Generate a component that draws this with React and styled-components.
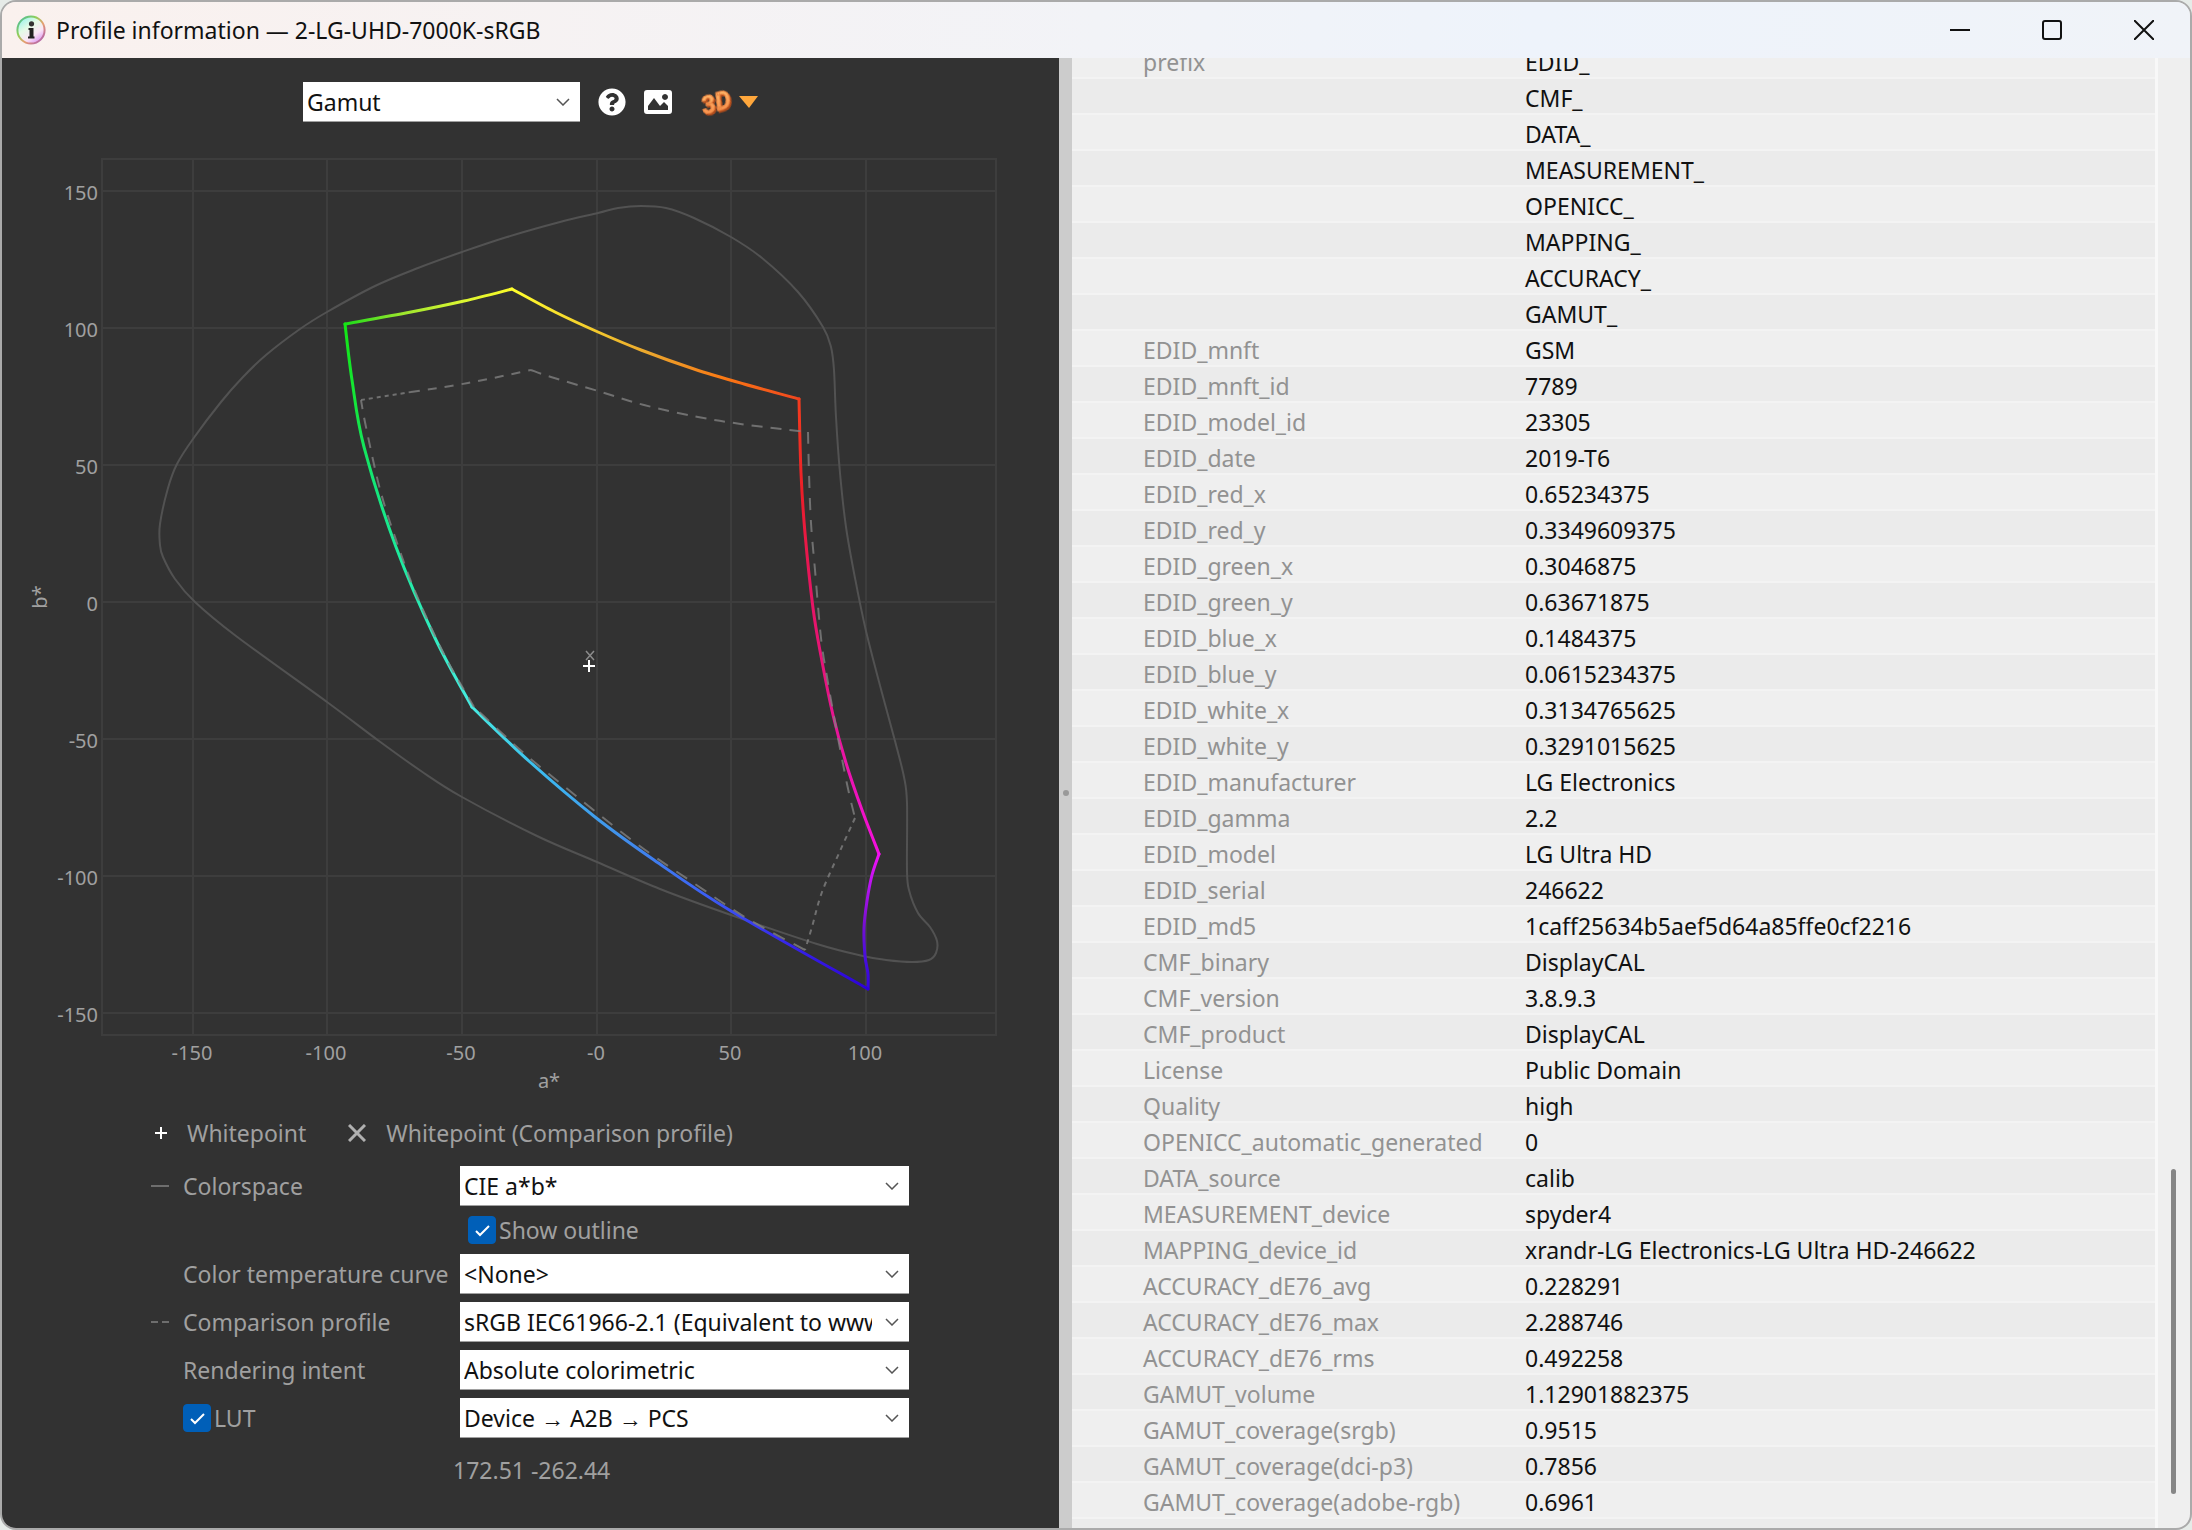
import { useState } from "react";
import styled, { createGlobalStyle } from "styled-components";
import { FaQuestionCircle } from "react-icons/fa";

const metadata = [
  ["prefix", "EDID_"],
  ["", "CMF_"],
  ["", "DATA_"],
  ["", "MEASUREMENT_"],
  ["", "OPENICC_"],
  ["", "MAPPING_"],
  ["", "ACCURACY_"],
  ["", "GAMUT_"],
  ["EDID_mnft", "GSM"],
  ["EDID_mnft_id", "7789"],
  ["EDID_model_id", "23305"],
  ["EDID_date", "2019-T6"],
  ["EDID_red_x", "0.65234375"],
  ["EDID_red_y", "0.3349609375"],
  ["EDID_green_x", "0.3046875"],
  ["EDID_green_y", "0.63671875"],
  ["EDID_blue_x", "0.1484375"],
  ["EDID_blue_y", "0.0615234375"],
  ["EDID_white_x", "0.3134765625"],
  ["EDID_white_y", "0.3291015625"],
  ["EDID_manufacturer", "LG Electronics"],
  ["EDID_gamma", "2.2"],
  ["EDID_model", "LG Ultra HD"],
  ["EDID_serial", "246622"],
  ["EDID_md5", "1caff25634b5aef5d64a85ffe0cf2216"],
  ["CMF_binary", "DisplayCAL"],
  ["CMF_version", "3.8.9.3"],
  ["CMF_product", "DisplayCAL"],
  ["License", "Public Domain"],
  ["Quality", "high"],
  ["OPENICC_automatic_generated", "0"],
  ["DATA_source", "calib"],
  ["MEASUREMENT_device", "spyder4"],
  ["MAPPING_device_id", "xrandr-LG Electronics-LG Ultra HD-246622"],
  ["ACCURACY_dE76_avg", "0.228291"],
  ["ACCURACY_dE76_max", "2.288746"],
  ["ACCURACY_dE76_rms", "0.492258"],
  ["GAMUT_volume", "1.12901882375"],
  ["GAMUT_coverage(srgb)", "0.9515"],
  ["GAMUT_coverage(dci-p3)", "0.7856"],
  ["GAMUT_coverage(adobe-rgb)", "0.6961"],
];

const xTicks = [
  ["-150", 193],
  ["-100", 327],
  ["-50", 462],
  ["-0", 597],
  ["50", 731],
  ["100", 866],
];

const yTicks = [
  ["150", 191],
  ["100", 328],
  ["50", 465],
  ["0", 602],
  ["-50", 739],
  ["-100", 876],
  ["-150", 1013],
];

// edges of the profile gamut, corner to corner
const gamutEdges = [
  {
    id: "green-yellow",
    colors: ["#19dc19", "#9be62d", "#d7f532", "#fafa28"],
    points: [[345, 324], [411, 312], [464, 301], [512, 289]],
  },
  {
    id: "yellow-red",
    colors: ["#ffff2d", "#f5d22d", "#eba52d", "#fa7814", "#f0461e"],
    points: [[512, 289], [555, 312], [598, 332], [641, 350], [694, 369], [744, 384], [799, 399]],
  },
  {
    id: "red-magenta",
    colors: ["#f53c1e", "#eb1e28", "#e6145f", "#e6147d", "#eb14aa", "#f50fe1"],
    points: [[799, 399], [801, 473], [805, 533], [813, 608], [821, 656], [833, 715], [846, 763], [862, 810], [879, 854]],
  },
  {
    id: "magenta-blue",
    colors: ["#f50ff5", "#b414f0", "#7d0fd2", "#4b0fdc", "#3205dc"],
    points: [[879, 854], [872, 875], [867, 901], [864, 928], [865, 956], [868, 974], [868, 989]],
  },
  {
    id: "blue-cyan",
    colors: ["#2d00d7", "#3728eb", "#3c64f5", "#4191eb", "#3cb9f0", "#46ebe1"],
    points: [[868, 989], [731, 911], [654, 860], [595, 817], [530, 762], [472, 707]],
  },
  {
    id: "cyan-green",
    colors: ["#46ebe1", "#32ebbe", "#1eeba0", "#14e678", "#14e63c", "#14e614"],
    points: [[472, 707], [435, 638], [396, 547], [364, 447], [352, 380], [345, 324]],
  },
];

const comparisonEdges = [
  { dash: "4 4", points: [[361, 400], [411, 392]] },
  { dash: "9 8", points: [[411, 392], [468, 383], [531, 370]] },
  { dash: "11 8", points: [[531, 370], [551, 377], [598, 391], [644, 405], [698, 417], [748, 425], [808, 432]] },
  { dash: "12 10", points: [[808, 432], [809, 473], [811, 523], [815, 570], [821, 638], [827, 677], [835, 722], [847, 784], [855, 818]] },
  { dash: "5 5", points: [[855, 818], [840, 851], [822, 892], [812, 927], [805, 950]] },
  { dash: "13 10", points: [[805, 950], [748, 919], [698, 886], [633, 841], [549, 774], [518, 748], [474, 707]] },
  { dash: "11 9", points: [[474, 707], [446, 658], [420, 603], [402, 557], [381, 493], [366, 427], [361, 400]] },
];

const locus = [
  [160, 545], [160, 524], [168, 488], [177, 464], [193, 439], [221, 402], [243, 377],
  [266, 355], [300, 329], [327, 312], [375, 286], [418, 268], [462, 252], [507, 237],
  [560, 222], [598, 213], [618, 208], [641, 206], [666, 208], [694, 218],
  [731, 237], [762, 258], [798, 292], [823, 327], [831, 347], [834, 370], [836, 417],
  [840, 473], [846, 527], [855, 578], [866, 631], [882, 693], [895, 741], [904, 777],
  [907, 803], [907, 870], [909, 890], [918, 913], [930, 927], [937, 941], [936, 953],
  [929, 960], [912, 962], [886, 960], [863, 956], [817, 944], [731, 915],
  [660, 889], [597, 862], [537, 836], [462, 797], [421, 771], [379, 741],
  [327, 702], [236, 636], [195, 602], [175, 579], [163, 557],
];

// Catmull-Rom spline through the points, written as cubic beziers
const spline = (points, closed = false) => {
  const n = points.length;
  const at = (i) =>
    closed ? points[(i + n) % n] : points[Math.min(Math.max(i, 0), n - 1)];
  let d = `M${points[0]}`;
  for (let i = 0; i < (closed ? n : n - 1); i++) {
    const [a, b, c, e] = [at(i - 1), at(i), at(i + 1), at(i + 2)];
    const c1 = [b[0] + (c[0] - a[0]) / 6, b[1] + (c[1] - a[1]) / 6];
    const c2 = [c[0] - (e[0] - b[0]) / 6, c[1] - (e[1] - b[1]) / 6];
    d += `C${c1} ${c2} ${c}`;
  }
  return d;
};

const GlobalStyle = createGlobalStyle`
  * {
    box-sizing: border-box;
  }

  body {
    margin: 0;
    background: #e6ebe8;
    font-family: "Segoe UI", "Noto Sans", "Open Sans", sans-serif;
    font-size: 23px;
    line-height: 32px;
  }

  button,
  select {
    font: inherit;
  }

  svg {
    display: block;
  }
`;

const Window = styled.main`
  display: flex;
  flex-direction: column;
  height: 100vh;
  overflow: hidden;
  border: 2px solid #aaaaaa;
  border-radius: 16px;
  background: #efefef;
`;

const TitleBar = styled.header`
  display: flex;
  flex: none;
  align-items: center;
  height: 56px;
  padding-left: 14px;
  background: linear-gradient(90deg, #faf1ee, #f2f3f7 50%, #eef3fb 70%, #f0f3f8);
`;

const Title = styled.h1`
  flex: 1;
  margin: 0;
  padding-left: 10px;
  color: #111;
  font-size: 23px;
  font-weight: 400;
`;

const WindowButton = styled.button`
  display: grid;
  place-items: center;
  width: 92px;
  height: 56px;
  padding: 0;
  border: 0;
  background: none;
`;

const Body = styled.div`
  display: grid;
  flex: 1;
  grid-template-columns: minmax(0, 1057fr) 13px minmax(0, 1118fr);
  min-height: 0;
`;

const PlotPanel = styled.section`
  overflow: hidden;
  background: #323232;
  color: #a0a0a0;
`;

const Toolbar = styled.div`
  display: flex;
  align-items: center;
  justify-content: center;
  gap: 18px;
  height: 82px;
  padding: 24px 0 18px;
`;

const PlotPicker = styled.div`
  width: 277px;
`;

const ToolButton = styled.button`
  padding: 0;
  border: 0;
  background: none;
  color: #fff;

  &:last-child {
    margin-left: 10px;
  }
`;

const Chart = styled.svg`
  width: 100%;
  height: auto;
`;

const Controls = styled.div`
  display: grid;
  width: 759px;
  margin: 0 auto;
`;

const Legend = styled.div`
  display: flex;
  align-items: center;
  height: 46px;
  padding-left: 4px;
`;

const LegendText = styled.span`
  padding: 0 42px 0 20px;
`;

const Form = styled.form`
  display: grid;
  grid-template-columns: 32px 277px 449px;
  gap: 8px 0;
  align-items: center;
  padding-top: 10px;
`;

const LineKey = styled.svg`
  width: 18px;
  height: 2px;
`;

const Label = styled.label`
  white-space: nowrap;
`;

const SelectBox = styled.div`
  display: grid;
  align-items: center;
`;

const NativeSelect = styled.select`
  grid-area: 1 / 1;
  width: 100%;
  height: 40px;
  padding: 0 37px 0 4px;
  border: 0;
  border-bottom: 1px solid #a0a0a0;
  border-radius: 0;
  background: #fff;
  color: #111;
  appearance: none;
`;

const Chevron = styled.svg`
  grid-area: 1 / 1;
  justify-self: end;
  width: 14px;
  height: 8px;
  margin-right: 10px;
  pointer-events: none;
`;

const OutlineRow = styled.div`
  grid-column: 3;
`;

const CheckLabel = styled.label`
  display: flex;
  align-items: center;
  gap: 3px;
  padding-left: ${(p) => (p.$indent ? "8px" : 0)};
`;

const CheckFrame = styled.span`
  display: grid;
`;

const CheckInput = styled.input`
  grid-area: 1 / 1;
  width: 28px;
  height: 28px;
  margin: 0;
  border: 1px solid #8a8a8a;
  border-radius: 4px;
  background: #fff;
  appearance: none;

  &:checked {
    border-color: #005fb8;
    background: #005fb8;
  }
`;

const CheckMark = styled.svg`
  grid-area: 1 / 1;
  width: 28px;
  height: 28px;
  pointer-events: none;
`;

const Status = styled.output`
  padding: 16px 0 0 302px;
`;

const Splitter = styled.div`
  display: grid;
  place-items: center;
  background: #cccccc;
`;

const Grip = styled.span`
  width: 6px;
  height: 6px;
  border-radius: 50%;
  background: #999;
`;

const InfoPanel = styled.section`
  display: flex;
  min-height: 0;
`;

// anchored to its last row, so the top row is cut by the title bar
const TableView = styled.div`
  display: flex;
  flex: 1;
  flex-direction: column;
  justify-content: flex-end;
  overflow: hidden;
  border-right: 3px solid #f8f8f8;
`;

const Table = styled.table`
  flex: none;
  width: 100%;
  border-collapse: collapse;
  table-layout: fixed;
`;

const Row = styled.tr`
  height: 36px;
  background: #efefef;
  box-shadow: inset 0 -2px #f3f3f3;

  &:nth-child(even) {
    background: #ebebeb;
  }
`;

const Name = styled.th`
  width: 453px;
  padding: 1px 0 0 71px;
  color: #929292;
  font-weight: 400;
  text-align: left;
  white-space: nowrap;
`;

const Value = styled.td`
  padding: 1px 0 0;
  color: #111;
  white-space: nowrap;
`;

const EmptyRow = styled.div`
  flex: none;
  height: 9px;
  background: #ebebeb;
`;

const Track = styled.div`
  display: flex;
  align-items: flex-end;
  width: 32px;
  padding: 0 13px 34px;
`;

const Thumb = styled.div`
  width: 5px;
  height: 325px;
  border-radius: 3px;
  background: #868686;
`;

const ThreeD = styled.text`
  fill: url(#amber);
  stroke: #ee8844;
  font: italic 700 25px Roboto, "Liberation Sans", sans-serif;
  filter: drop-shadow(1px 2px 0 #b04c1c);
`;

const InfoIcon = () => (
  <svg width="30" height="30" viewBox="0 0 30 30" aria-hidden="true">
    <defs>
      <linearGradient id="ring" x1="0" y1="0" x2="1" y2="1">
        <stop offset="0" stopColor="#3fb8a8" />
        <stop offset="0.35" stopColor="#8fcf5a" />
        <stop offset="0.6" stopColor="#e8a070" />
        <stop offset="1" stopColor="#a04fc0" />
      </linearGradient>
      <linearGradient id="disc" x1="0.1" y1="0" x2="0.8" y2="1">
        <stop offset="0" stopColor="#8df0ea" />
        <stop offset="0.4" stopColor="#e4fbe6" />
        <stop offset="0.7" stopColor="#fbe6f6" />
        <stop offset="1" stopColor="#d68af0" />
      </linearGradient>
    </defs>
    <circle cx="15" cy="15" r="13.6" fill="url(#disc)" stroke="url(#ring)" strokeWidth="2" />
    <circle cx="15.5" cy="8.8" r="2.6" fill="#333" />
    <path d="M12.5 13h5v8.500h1v2h-6.500v-2h1.500v-6.500h-1z" fill="#222" />
  </svg>
);

const ImageIcon = () => (
  <svg width="28" height="24" viewBox="0 0 28 24" aria-hidden="true">
    <path
      fillRule="evenodd"
      fill="#fff"
      d="M3 0h22a3 3 0 0 1 3 3v18a3 3 0 0 1-3 3H3a3 3 0 0 1-3-3V3a3 3 0 0 1 3-3zM21 4a3 3 0 1 0 .01 0zM4 20h20v-4l-4-4-4 4-6-8-6 8z"
    />
  </svg>
);

const ThreeDIcon = () => (
  <svg width="58" height="36" viewBox="0 0 58 36" aria-hidden="true">
    <defs>
      <linearGradient id="amber" x1="0" y1="0" x2="0" y2="1">
        <stop offset="0" stopColor="#ffc070" />
        <stop offset="1" stopColor="#f88848" />
      </linearGradient>
    </defs>
    <ThreeD x="1" y="27" transform="rotate(-16 16 18)">3D</ThreeD>
    <path d="M39 12h19l-9 12z" fill="#ffa73c" />
  </svg>
);

const Select = ({ id, label, options }) => (
  <SelectBox>
    <NativeSelect id={id} aria-label={label}>
      {options.map((o) => (
        <option key={o}>{o}</option>
      ))}
    </NativeSelect>
    <Chevron viewBox="0 0 14 8" aria-hidden="true">
      <path d="M1 1l6 6 6-6" fill="none" stroke="#555" strokeWidth="1.500" />
    </Chevron>
  </SelectBox>
);

const CheckBox = ({ id, label, indent }) => {
  const [checked, setChecked] = useState(true);
  return (
    <CheckLabel htmlFor={id} $indent={indent}>
      <CheckFrame>
        <CheckInput
          id={id}
          type="checkbox"
          checked={checked}
          onChange={(e) => setChecked(e.target.checked)}
        />
        {checked && (
          <CheckMark viewBox="0 0 28 28" aria-hidden="true">
            <path d="M8 15l4 4 9-9" fill="none" stroke="#fff" strokeWidth="2" />
          </CheckMark>
        )}
      </CheckFrame>
      {label}
    </CheckLabel>
  );
};

const GamutChart = () => (
  <Chart viewBox="2 140 1057 970" role="img" aria-label="Gamut in CIE a*b*">
    <defs>
      {gamutEdges.map(({ id, colors, points }) => {
        const [x1, y1] = points[0];
        const [x2, y2] = points[points.length - 1];
        return (
          <linearGradient key={id} id={id} gradientUnits="userSpaceOnUse" x1={x1} y1={y1} x2={x2} y2={y2}>
            {colors.map((c, i) => (
              <stop key={i} offset={i / (colors.length - 1)} stopColor={c} />
            ))}
          </linearGradient>
        );
      })}
    </defs>

    <g stroke="#3d3d3d" strokeWidth="2" fill="none">
      <rect x="102" y="159" width="894" height="876" />
      {xTicks.map(([t, x]) => (
        <path key={t} d={`M${x} 159V1035`} />
      ))}
      {yTicks.map(([t, y]) => (
        <path key={t} d={`M102 ${y}H996`} />
      ))}
    </g>

    <g fill="#a0a0a0" fontSize="20">
      {xTicks.map(([t, x]) => (
        <text key={t} x={x - 1} y="1060" textAnchor="middle">{t}</text>
      ))}
      {yTicks.map(([t, y]) => (
        <text key={t} x="98" y={y + 9} textAnchor="end">{t}</text>
      ))}
      <text x="549" y="1088" textAnchor="middle">a*</text>
      <text transform="translate(47 597) rotate(-90)" textAnchor="middle">b*</text>
    </g>

    <path d={spline(locus, true)} fill="none" stroke="#525252" strokeWidth="2" />
    {gamutEdges.map(({ id, points }) => (
      <path
        key={id}
        d={spline(points)}
        fill="none"
        stroke={`url(#${id})`}
        strokeWidth="3"
        strokeLinecap="round"
      />
    ))}
    {comparisonEdges.map(({ dash, points }) => (
      <path
        key={dash + points[0]}
        d={spline(points)}
        fill="none"
        stroke="#808080"
        strokeOpacity="0.8"
        strokeWidth="2"
        strokeDasharray={dash}
      />
    ))}

    <path d="M586 651l8 9M594 651l-8 9" stroke="#8c8c8c" strokeWidth="1.500" />
    <path d="M583 666h12M589 660v12" stroke="#fff" strokeWidth="2" />
  </Chart>
);

const App = () => (
  <>
    <GlobalStyle />
    <Window>
      <TitleBar>
        <InfoIcon />
        <Title>Profile information — 2-LG-UHD-7000K-sRGB</Title>
        <WindowButton aria-label="Minimize">
          <svg width="20" height="20" viewBox="0 0 20 20">
            <path d="M0 10h20" stroke="#111" strokeWidth="2" />
          </svg>
        </WindowButton>
        <WindowButton aria-label="Maximize">
          <svg width="20" height="20" viewBox="0 0 20 20">
            <rect x="1" y="1" width="18" height="18" rx="2" fill="none" stroke="#111" strokeWidth="2" />
          </svg>
        </WindowButton>
        <WindowButton aria-label="Close">
          <svg width="20" height="20" viewBox="0 0 20 20">
            <path d="M0 0l20 20M20 0L0 20" stroke="#111" strokeWidth="2" />
          </svg>
        </WindowButton>
      </TitleBar>

      <Body>
        <PlotPanel>
          <Toolbar>
            <PlotPicker>
              <Select
                id="plot"
                label="Plot"
                options={["Gamut", "Tone response curves"]}
              />
            </PlotPicker>
            <ToolButton aria-label="Help">
              <FaQuestionCircle size={28} />
            </ToolButton>
            <ToolButton aria-label="Save image">
              <ImageIcon />
            </ToolButton>
            <ToolButton aria-label="View 3D">
              <ThreeDIcon />
            </ToolButton>
          </Toolbar>

          <GamutChart />

          <Controls>
            <Legend>
              <svg width="12" height="12" viewBox="0 0 12 12" aria-hidden="true">
                <path d="M0 6h12M6 0v12" stroke="#fff" strokeWidth="2" />
              </svg>
              <LegendText>Whitepoint</LegendText>
              <svg width="18" height="18" viewBox="0 0 18 18" aria-hidden="true">
                <path d="M1 1l16 16M17 1L1 17" stroke="#b0b0b0" strokeWidth="3" />
              </svg>
              <LegendText>Whitepoint (Comparison profile)</LegendText>
            </Legend>

            <Form>
              <LineKey viewBox="0 0 18 2" aria-hidden="true">
                <path d="M0 1h18" stroke="#6e6e6e" strokeWidth="2" />
              </LineKey>
              <Label htmlFor="colorspace">Colorspace</Label>
              <Select id="colorspace" options={["CIE a*b*", "CIE u*v*", "CIE xy"]} />

              <OutlineRow>
                <CheckBox id="outline" label="Show outline" indent />
              </OutlineRow>

              <span />
              <Label htmlFor="temperature">Color temperature curve</Label>
              <Select id="temperature" options={["<None>", "Daylight", "Blackbody"]} />

              <LineKey viewBox="0 0 18 2" aria-hidden="true">
                <path d="M0 1h18" stroke="#6e6e6e" strokeWidth="2" strokeDasharray="7 4" />
              </LineKey>
              <Label htmlFor="comparison">Comparison profile</Label>
              <Select
                id="comparison"
                options={["sRGB IEC61966-2.1 (Equivalent to www.srgb.com 1998 HP profile)"]}
              />

              <span />
              <Label htmlFor="intent">Rendering intent</Label>
              <Select id="intent" options={["Absolute colorimetric", "Perceptual"]} />

              <span />
              <CheckBox id="lut" label="LUT" />
              <Select
                id="direction"
                label="LUT direction"
                options={["Device → A2B → PCS", "PCS → B2A → Device"]}
              />
            </Form>

            <Status>172.51 -262.44</Status>
          </Controls>
        </PlotPanel>

        <Splitter>
          <Grip />
        </Splitter>

        <InfoPanel>
          <TableView>
            <Table>
              <tbody>
                {metadata.map(([name, value], i) => (
                  <Row key={i}>
                    <Name scope="row">{name}</Name>
                    <Value>{value}</Value>
                  </Row>
                ))}
              </tbody>
            </Table>
            <EmptyRow />
          </TableView>
          <Track>
            <Thumb />
          </Track>
        </InfoPanel>
      </Body>
    </Window>
  </>
);

export default App;
